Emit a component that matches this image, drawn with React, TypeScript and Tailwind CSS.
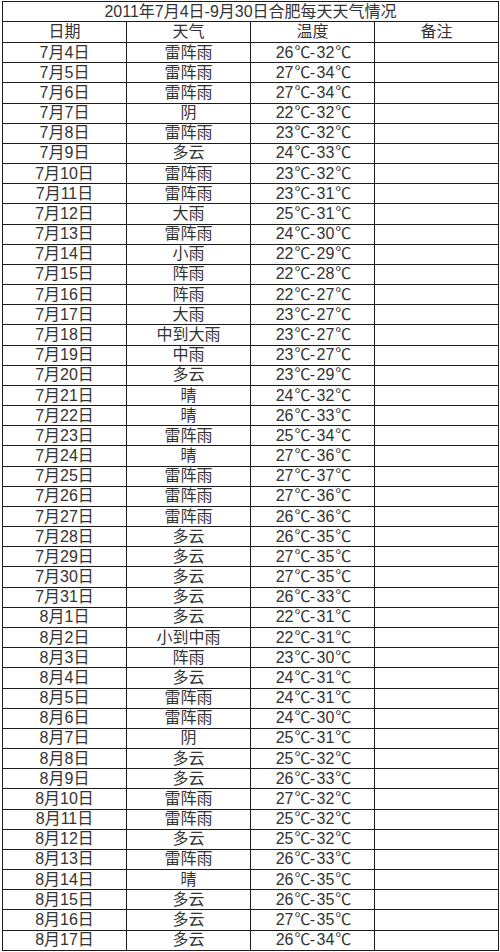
import React from 'react';

type Row = [string, string, string];

const rows: Row[] = [
  ['7月4日', '雷阵雨', '26℃-32℃'],
  ['7月5日', '雷阵雨', '27℃-34℃'],
  ['7月6日', '雷阵雨', '27℃-34℃'],
  ['7月7日', '阴', '22℃-32℃'],
  ['7月8日', '雷阵雨', '23℃-32℃'],
  ['7月9日', '多云', '24℃-33℃'],
  ['7月10日', '雷阵雨', '23℃-32℃'],
  ['7月11日', '雷阵雨', '23℃-31℃'],
  ['7月12日', '大雨', '25℃-31℃'],
  ['7月13日', '雷阵雨', '24℃-30℃'],
  ['7月14日', '小雨', '22℃-29℃'],
  ['7月15日', '阵雨', '22℃-28℃'],
  ['7月16日', '阵雨', '22℃-27℃'],
  ['7月17日', '大雨', '23℃-27℃'],
  ['7月18日', '中到大雨', '23℃-27℃'],
  ['7月19日', '中雨', '23℃-27℃'],
  ['7月20日', '多云', '23℃-29℃'],
  ['7月21日', '晴', '24℃-32℃'],
  ['7月22日', '晴', '26℃-33℃'],
  ['7月23日', '雷阵雨', '25℃-34℃'],
  ['7月24日', '晴', '27℃-36℃'],
  ['7月25日', '雷阵雨', '27℃-37℃'],
  ['7月26日', '雷阵雨', '27℃-36℃'],
  ['7月27日', '雷阵雨', '26℃-36℃'],
  ['7月28日', '多云', '26℃-35℃'],
  ['7月29日', '多云', '27℃-35℃'],
  ['7月30日', '多云', '27℃-35℃'],
  ['7月31日', '多云', '26℃-33℃'],
  ['8月1日', '多云', '22℃-31℃'],
  ['8月2日', '小到中雨', '22℃-31℃'],
  ['8月3日', '阵雨', '23℃-30℃'],
  ['8月4日', '多云', '24℃-31℃'],
  ['8月5日', '雷阵雨', '24℃-31℃'],
  ['8月6日', '雷阵雨', '24℃-30℃'],
  ['8月7日', '阴', '25℃-31℃'],
  ['8月8日', '多云', '25℃-32℃'],
  ['8月9日', '多云', '26℃-33℃'],
  ['8月10日', '雷阵雨', '27℃-32℃'],
  ['8月11日', '雷阵雨', '25℃-32℃'],
  ['8月12日', '多云', '25℃-32℃'],
  ['8月13日', '雷阵雨', '26℃-33℃'],
  ['8月14日', '晴', '26℃-35℃'],
  ['8月15日', '多云', '26℃-35℃'],
  ['8月16日', '多云', '27℃-35℃'],
  ['8月17日', '多云', '26℃-34℃'],
];

// ℃ takes a full-width slot like in the original sheet
const Temp: React.FC<{ text: string }> = ({ text }) => {
  const [lo, hi] = text.replace(/℃/g, '').split('-');
  return (
    <span className="flex items-center">
      <span>{lo}</span>
      <span className="inline-block w-[15px] pl-[1px]">℃</span>
      <span className="inline-block w-[8px] text-center">-</span>
      <span>{hi}</span>
      <span className="inline-block w-[15px] pl-[1px]">℃</span>
    </span>
  );
};

const Cell: React.FC<{ children?: React.ReactNode; last?: boolean }> = ({ children, last }) => (
  <div className={`flex items-center justify-center ${last ? '' : 'border-r border-[#1c1c1c]'}`}>{children}</div>
);

export default function App() {
  return (
    <div className="w-[500px] h-[952px] bg-white overflow-hidden pt-[1px]">
      <div className="ml-[2px] w-[497px] border-l border-t border-r border-[#1c1c1c] text-[16px] leading-none text-[#333] font-['Liberation_Sans','Noto_Sans_CJK_SC',sans-serif]">
        {/* title */}
        <div className="h-[20px] flex items-center justify-center border-b border-[#1c1c1c]">
          2011年7月4日-9月30日合肥每天天气情况
        </div>
        <div className="grid grid-cols-[124px_124px_124px_123px] h-[21px] border-b border-[#1c1c1c]">
          <Cell>日期</Cell>
          <Cell>天气</Cell>
          <Cell>温度</Cell>
          <Cell last>备注</Cell>
        </div>
        {rows.map(r => (
          <div key={r[0]} className="grid grid-cols-[124px_124px_124px_123px] h-[20.18px] border-b border-[#1c1c1c]">
            <Cell>{r[0]}</Cell>
            <Cell>{r[1]}</Cell>
            <Cell><Temp text={r[2]} /></Cell>
            <Cell last />
          </div>
        ))}
      </div>
    </div>
  );
}
